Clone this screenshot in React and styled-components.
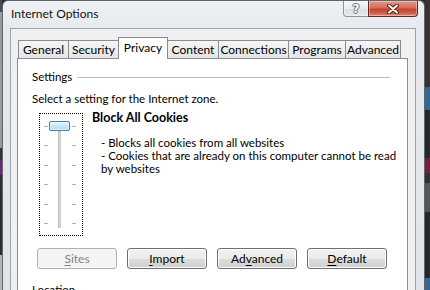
import React from 'react';
import styled, { createGlobalStyle } from 'styled-components';

const Global = createGlobalStyle`
  html, body { margin: 0; padding: 0; }
  body {
    width: 430px; height: 290px; overflow: hidden; background: #2a2a2a;
    font-family: Lato, "Noto Sans", sans-serif; font-size: 11.5px; color: #000;
  }
`;

const Desktop = styled.div`
  display: flex; width: 430px; height: 290px; overflow: hidden;
`;

const Strip = styled.div`
  display: flex; flex-direction: column; width: ${p => p.$w}px; flex-shrink: 0;
`;

const Patch = styled.div`
  height: ${p => p.$h}px; background: ${p => p.$c}; flex-shrink: 0;
`;

const Window = styled.div`
  flex: 1; display: flex; flex-direction: column; min-width: 0;
  border: 1px solid #5d6670; border-bottom: none;
  border-radius: 6px 6px 0 0;
  background: linear-gradient(to bottom, #eef1f4 0, #e6e9ed 28px, #dfe4e9 100%);
  padding: 0 8px 0 7px;
`;

const TitleBar = styled.div`
  display: flex; height: 27px; flex-shrink: 0;
`;

const Title = styled.div`
  margin: 5px 0 0 1px; line-height: 16px; color: #111; font-size: 12px;
  text-shadow: 0 0 6px rgba(255,255,255,0.9);
`;

const Controls = styled.div`
  margin-left: auto; margin-right: -2px; display: flex; align-self: flex-start; height: 16px;
`;

const CtlButton = styled.div`
  width: ${p => p.$w}px; height: 16px; box-sizing: border-box;
  display: flex; align-items: center; justify-content: center;
  border: 1px solid ${p => (p.$close ? '#5e2a24' : '#8a95a2')};
  border-top: none;
  margin-left: -1px;
  border-radius: ${p => (p.$close ? '0 0 4px 0' : '0 0 0 4px')};
  background: ${p => p.$close
    ? 'linear-gradient(to bottom, #e49a8b 0%, #d66d5c 45%, #c4432f 55%, #cd5e47 80%, #e2917d 100%)'
    : 'linear-gradient(to bottom, #f5f6f8 0%, #e8ebef 50%, #d9dee4 55%, #e6e9ee 100%)'};
  box-shadow: inset 0 0 0 1px rgba(255,255,255,0.35);
`;

const HelpGlyph = styled.span`
  font-family: "DejaVu Sans", sans-serif; font-size: 12px; line-height: 12px; font-weight: 700;
  color: #f4f6f8;
  text-shadow: -1px 0 #6b7580, 1px 0 #6b7580, 0 -1px #6b7580, 0 1px #6b7580;
`;

const Client = styled.div`
  flex: 1; display: flex; flex-direction: column; min-height: 0;
  background: #f0f0f0; border: 1px solid #9aa4ae; border-bottom: none;
  padding: 7px 7px 0 6px;
`;

const TabRow = styled.div`
  display: flex; align-items: flex-end; padding-left: 2px; height: 22px; flex-shrink: 0;
`;

const Tab = styled.div`
  position: relative; z-index: ${p => (p.$active ? 2 : 1)};
  width: ${p => p.$w}px; height: ${p => (p.$active ? 22 : 18)}px;
  margin-left: -1px; margin-bottom: ${p => (p.$active ? -1 : 0)}px;
  box-sizing: border-box;
  border: 1px solid #898c95; border-bottom: none;
  background: ${p => (p.$active ? '#fff' : 'linear-gradient(to bottom, #f5f5f5, #e5e5e5)')};
  display: flex; align-items: center; justify-content: center;
  line-height: 14px; padding-bottom: ${p => (p.$active ? 2 : 0)}px;
  white-space: nowrap; font-size: 12px;
`;

const Panel = styled.div`
  position: relative; z-index: 1;
  flex: 1; background: #fff; border: 1px solid #898c95; border-bottom: none;
  padding: 10px 17px 0 14px;
  display: flex; flex-direction: column;
`;

const GroupHead = styled.div`
  display: flex; align-items: center; gap: 5px; line-height: 16px;
`;

const GroupLine = styled.div`
  flex: 1; height: 1px; background: #b7bec5; margin-top: 1px;
`;

const Line = styled.div`
  line-height: 16px; margin-top: ${p => p.$mt || 0}px;
`;

const SliderRow = styled.div`
  display: flex; align-items: flex-start; margin-top: 6px;
`;

const SliderBox = styled.div`
  margin-left: 7px; width: 44px; height: 123px; box-sizing: border-box; flex-shrink: 0;
  border: 1px dotted #000;
  display: flex; padding: 7px 0 0 4px;
`;

const Ticks = styled.div`
  display: flex; flex-direction: column; gap: 18.4px; padding-top: 5px; width: 4px;
  margin-left: ${p => p.$ml}px;
`;

const Tick = styled.div`
  width: 4px; height: 1px; background: #b0b0b0;
`;

const TrackCol = styled.div`
  display: flex; flex-direction: column; align-items: center; width: 21px; margin-left: 1px;
`;

const Thumb = styled.div`
  width: 21px; height: 10px; box-sizing: border-box;
  border: 1px solid #3c81b0; border-radius: 2px;
  background: linear-gradient(to bottom, #e6f6fd 0%, #c5e9fa 50%, #a9dbf4 100%);
  box-shadow: inset 0 0 0 1px rgba(255,255,255,0.6);
`;

const Track = styled.div`
  width: 3px; height: 97px; background: #d2d2d2; border-left: 1px solid #c0c0c0; box-sizing: border-box;
`;

const TextCol = styled.div`
  margin-left: 9px; margin-top: -2px; margin-right: -9px; flex: 1;
`;

const ZoneTitle = styled.div`
  font-weight: 700; line-height: 14px; font-size: 12.5px;
`;

const Desc = styled.div`
  margin-top: 10.5px; padding-left: 9px; line-height: 13px;
`;

const ButtonRow = styled.div`
  display: flex; gap: 10px; margin-top: 12px; padding-left: 5px;
`;

const Button = styled.div`
  width: 80px; height: 21px; box-sizing: border-box;
  border: 1px solid ${p => (p.$disabled ? '#adb2b5' : '#707070')};
  border-radius: 3px;
  background: ${p => (p.$disabled
    ? '#f4f4f4'
    : 'linear-gradient(to bottom, #f2f2f2 0%, #ebebeb 50%, #dddddd 50%, #cfcfcf 100%)')};
  box-shadow: inset 0 0 0 1px ${p => (p.$disabled ? '#f4f4f4' : '#fcfcfc')};
  color: ${p => (p.$disabled ? '#838383' : '#000')};
  display: flex; align-items: center; justify-content: center; line-height: 14px; font-size: 12px;
`;

const U = styled.span`
  text-decoration: underline; text-underline-offset: 2px;
`;

const tabs = [
  ['General', 51], ['Security', 51], ['Privacy', 50, true], ['Content', 52],
  ['Connections', 71], ['Programs', 58], ['Advanced', 56],
];

const tickList = [0, 1, 2, 3, 4, 5];

export default function App() {
  return (
    <>
      <Global />
      <Desktop>
        <Strip $w={2}>
          <Patch $h={12} $c="#4a4a4a" />
          <Patch $h={136} $c="#9a9a9a" />
          <Patch $h={12} $c="#333" />
          <Patch $h={15} $c="#6a2a6a" />
          <Patch $h={80} $c="#2e2e2e" />
          <Patch $h={35} $c="#b5b5b5" />
        </Strip>
        <Window>
          <TitleBar>
            <Title>Internet Options</Title>
            <Controls>
              <CtlButton $w={26}><HelpGlyph>?</HelpGlyph></CtlButton>
              <CtlButton $w={50} $close>
                <svg width="12" height="10" viewBox="0 0 12 10">
                  <path d="M2 1.5 L10 8.5 M10 1.5 L2 8.5" stroke="#5a1c14" strokeWidth="4" strokeLinecap="round" />
                  <path d="M2 1.5 L10 8.5 M10 1.5 L2 8.5" stroke="#fff" strokeWidth="2" strokeLinecap="round" />
                </svg>
              </CtlButton>
            </Controls>
          </TitleBar>
          <Client>
            <TabRow>
              {tabs.map(([label, w, active]) => (
                <Tab key={label} $w={w} $active={active}>{label}</Tab>
              ))}
            </TabRow>
            <Panel>
              <GroupHead>
                <span>Settings</span>
                <GroupLine />
              </GroupHead>
              <Line $mt={6}>Select a setting for the Internet zone.</Line>
              <SliderRow>
                <SliderBox>
                  <Ticks $ml={0}>{tickList.map(i => <Tick key={i} />)}</Ticks>
                  <TrackCol>
                    <Thumb />
                    <Track />
                  </TrackCol>
                  <Ticks $ml={2}>{tickList.map(i => <Tick key={i} />)}</Ticks>
                </SliderBox>
                <TextCol>
                  <ZoneTitle>Block All Cookies</ZoneTitle>
                  <Desc>
                    - Blocks all cookies from all websites<br />
                    - Cookies that are already on this computer cannot be read by websites
                  </Desc>
                </TextCol>
              </SliderRow>
              <ButtonRow>
                <Button $disabled><span><U>S</U>ites</span></Button>
                <Button><span><U>I</U>mport</span></Button>
                <Button><span>Ad<U>v</U>anced</span></Button>
                <Button><span><U>D</U>efault</span></Button>
              </ButtonRow>
              <Line $mt={13}>Location</Line>
            </Panel>
          </Client>
        </Window>
        <Strip $w={5}>
          <Patch $h={87} $c="#3b3030" />
          <Patch $h={23} $c="#2f6b96" />
          <Patch $h={48} $c="#262626" />
          <Patch $h={15} $c="#7b1d3a" />
          <Patch $h={10} $c="#303030" />
          <Patch $h={29} $c="#555" />
          <Patch $h={66} $c="#262626" />
          <Patch $h={12} $c="#2f6b96" />
        </Strip>
      </Desktop>
    </>
  );
}
